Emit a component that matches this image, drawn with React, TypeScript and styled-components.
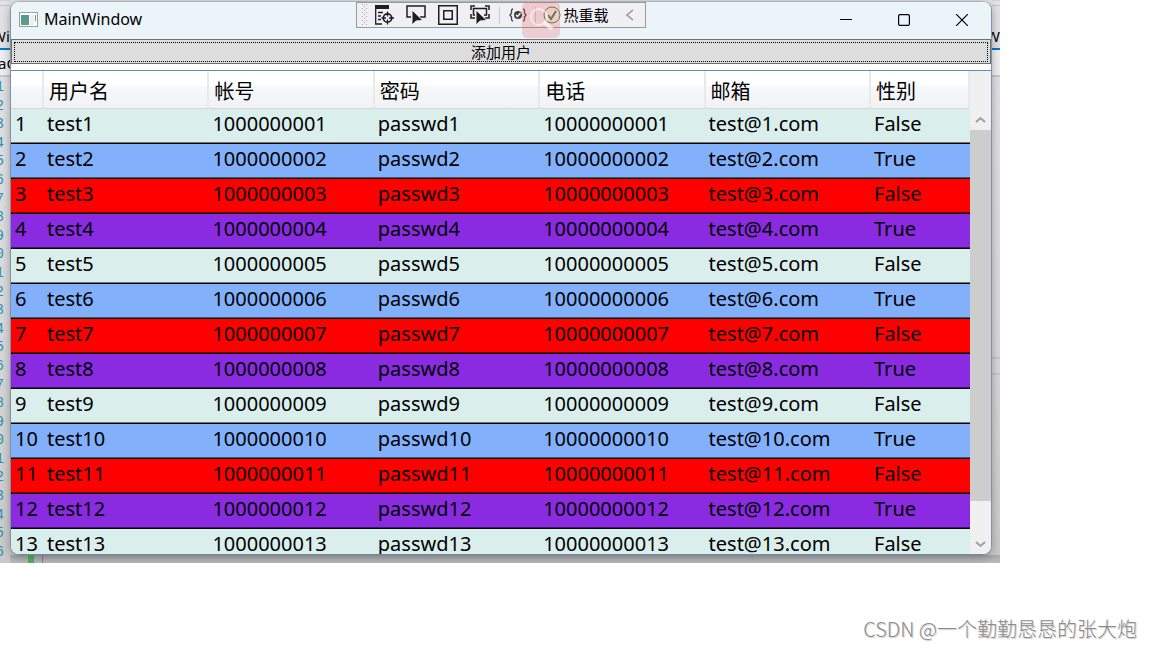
import React from 'react';
import styled, { createGlobalStyle } from 'styled-components';

const ui = `'Noto Sans', 'Noto Sans CJK SC', sans-serif`;
const mono = `'Liberation Mono', 'DejaVu Sans Mono', monospace`;

const GlobalStyle = createGlobalStyle`
  *, *::before, *::after { box-sizing: border-box; }
  body { margin: 0; background: #fff; color: #000; font-family: ${ui}; overflow: hidden; }
  button { font: inherit; color: inherit; cursor: pointer; }
`;

const Page = styled.main`
  min-height: 100vh;
  display: flex;
  flex-direction: column;
  justify-content: space-between;
`;

const Desktop = styled.section`
  margin-right: 152px;
  display: grid;
  grid-template-columns: 10px minmax(0, 1fr) 8px;
  background: linear-gradient(#e3e3e7, #d9d9dc 60%, #c9c9c9);
  overflow: hidden;
`;

const EditorSide = styled.div<{ $full?: boolean }>`
  grid-row: ${(p) => (p.$full ? '1 / 3' : '1')};
  grid-column: ${(p) => (p.$full ? '1' : '3')};
  display: flex;
  flex-direction: column;
  overflow: hidden;
  padding-top: 4px;
  border-top: 1px solid #d4d4d8;
`;

const TabStub = styled.div<{ $pull: number }>`
  height: 45px;
  padding-top: 20px;
  border-top: 1px solid #c6c6d2;
  border-bottom: 2px solid #007acc;
  font-size: 15px;
  line-height: 20px;
  white-space: nowrap;
  text-indent: ${(p) => p.$pull}px;
`;

const ScopeStub = styled.div`
  height: 27px;
  padding-top: 3px;
  border-bottom: 2px solid #c6c6d6;
  background: #f0f0f2;
  font-size: 15px;
  line-height: 20px;
  white-space: nowrap;
  text-indent: -2px;
`;

const LineNumbers = styled.ol`
  flex: 1;
  margin: 0;
  padding: 1px 0 2px;
  width: 4px;
  list-style: none;
  display: flex;
  flex-direction: column;
  align-items: flex-end;
  justify-content: space-between;
  overflow: hidden;
  color: #2b91af;
  font: 14px/18px ${mono};
`;

const EditorRule = styled.div`
  margin-top: 280px;
  height: 18px;
  border-top: 2px solid #c6c6d0;
  border-bottom: 2px solid #c6c6d0;
`;

const CodeStrip = styled.div`
  grid-row: 2;
  grid-column: 2 / -1;
  height: 8px;
  padding-left: 18px;
  display: flex;
  background: linear-gradient(#a9a9a9, #bcbcbc);
`;

const ChangeMark = styled.span`
  width: 6px;
  background: #57b257;
`;

const FoldLine = styled.span`
  width: 1px;
  margin-left: 8px;
  background: #808080;
`;

const AppWindow = styled.section`
  grid-row: 1;
  grid-column: 2;
  position: relative;
  margin-top: 1px;
  height: 554px;
  display: flex;
  flex-direction: column;
  border: 1px solid #aab4ba;
  border-left-color: #7d93a8;
  border-right-color: #7d93a8;
  border-bottom-color: #688caf;
  border-radius: 9px;
  background: #fff;
  overflow: hidden;
  box-shadow: 0 2px 10px rgba(0, 0, 0, 0.3);
`;

const TitleBar = styled.header`
  height: 37px;
  flex: none;
  padding: 0 0 2px 8px;
  display: flex;
  align-items: center;
  background: #ebf5f9;
`;

const Title = styled.h1`
  flex: 1;
  margin: 0;
  padding: 0 0 2px 6px;
  font-size: 16px;
  line-height: 20px;
  font-weight: 400;
`;

const CaptionButton = styled.button`
  width: 58px;
  height: 35px;
  padding: 0;
  border: 0;
  background: none;
  display: grid;
  place-items: center;
`;

const DebugBar = styled.div`
  position: absolute;
  top: 0;
  left: 50%;
  width: 290px;
  height: 26px;
  margin-left: -145px;
  padding-left: 5px;
  display: flex;
  align-items: center;
  border: 1px solid #999;
  background: #f0eff3;
`;

const ToolButton = styled.button<{ $width?: number }>`
  width: ${(p) => p.$width ?? 32}px;
  flex: none;
  height: 24px;
  padding: 0;
  border: 0;
  background: none;
  display: flex;
  align-items: center;
  justify-content: center;
  gap: 2px;
  font-size: 15px;
  line-height: 20px;
  white-space: nowrap;
`;

const ToolGroup = styled.div`
  display: flex;
  margin-right: 3px;
`;

const Divider = styled.span`
  width: 1px;
  height: 17px;
  background: #c9c9dd;
`;

const SearchBadge = styled.div`
  position: absolute;
  top: 0;
  left: 50%;
  width: 38px;
  height: 36px;
  margin-left: 21px;
  border-radius: 5px;
  background: rgba(235, 90, 90, 0.25);
  pointer-events: none;
`;

const AddButton = styled.button`
  flex: none;
  height: 25px;
  padding: 2px 2px 1px;
  border: 1px solid #707070;
  background: #ddd;
  font-size: 15px;
  line-height: 18px;
`;

const FocusRing = styled.span`
  display: block;
  height: 20px;
  border: 1px dotted #000;
`;

const GridPanel = styled.div`
  flex: 1;
  min-height: 0;
  margin-top: 6px;
  display: grid;
  grid-template-columns: minmax(0, 1fr) 21px;
  border-top: 1px solid #688caf;
`;

const TableClip = styled.div`
  min-height: 0;
  overflow: hidden;
`;

const UserTable = styled.table`
  width: 100%;
  table-layout: fixed;
  border-collapse: separate;
  border-spacing: 0;
  font-size: 20px;
  line-height: 28px;
`;

const HeadCell = styled.th`
  height: 38px;
  padding: 4px 0 0 5px;
  border-right: 2px solid #e8e9eb;
  border-bottom: 1px solid #d5d5d5;
  background: linear-gradient(#fff 40%, #f7f8fa 41%, #f0f2f4);
  font-weight: 400;
  text-align: left;
  white-space: nowrap;
`;

const rowColors = ['#daeeec', '#82b0fa', '#ff0000', '#8a2be2'];

const Row = styled.tr<{ $tone: number }>`
  background: ${(p) => rowColors[p.$tone]};
`;

const Cell = styled.td`
  height: 35px;
  padding: 0 0 4px 3px;
  border-bottom: 1px solid #000;
  box-shadow: inset 0 -1px rgba(0, 0, 0, 0.5);
  white-space: nowrap;

  &:first-child {
    padding-left: 4px;
  }
`;

const ScrollBar = styled.div`
  min-height: 0;
  padding-top: 38px;
  display: flex;
  flex-direction: column;
  background: #f0f0f0;
`;

const ScrollArrow = styled.button`
  height: 21px;
  flex: none;
  padding: 0;
  border: 0;
  background: none;
  display: grid;
  place-items: center;
`;

const Track = styled.div`
  flex: 1;
`;

const Thumb = styled.div`
  height: 92%;
  background: #cdcdcd;
`;

const Credit = styled.footer`
  padding: 0 15px 5px 0;
  font: 300 20px/28px 'Noto Sans CJK SC', sans-serif;
  color: #8c8c8c;
  text-shadow: 1px 1px 1px #ccc;
  text-align: right;
`;

const Chevron = ({ up }: { up?: boolean }) => (
  <svg width="11" height="8" viewBox="0 0 11 8" fill="none" stroke="#a0a0a0" strokeWidth="2">
    <path d={up ? 'M1 6 5.500 2 10 6' : 'M1 2 5.500 6 10 2'} />
  </svg>
);

const Pointer = () => <path d="M7 6v15l4-4 7-.5z" fill="#1e1e1e" stroke="#f0eff3" strokeWidth="1" />;

const columns = ['', '用户名', '帐号', '密码', '电话', '邮箱', '性别'];

const users = Array.from({ length: 13 }, (_, i) => {
  const n = i + 1;
  const tail = String(n).padStart(2, '0');
  return [n, `test${n}`, `10000000${tail}`, `passwd${n}`, `100000000${tail}`, `test@${n}.com`, n % 2 ? 'False' : 'True'];
});

export default function App() {
  return (
    <>
      <GlobalStyle />
      <Page>
        <Desktop>
          <EditorSide $full>
            <TabStub $pull={-8}>Win</TabStub>
            <ScopeStub>aG</ScopeStub>
            <LineNumbers>
              {Array.from({ length: 26 }, (_, i) => (
                <li key={i}>{(i + 1) % 10}</li>
              ))}
            </LineNumbers>
          </EditorSide>
          <AppWindow>
            <TitleBar>
              <svg width="19" height="15" viewBox="0 0 19 15">
                <defs>
                  <linearGradient id="pane" x2="0" y2="1">
                    <stop stopColor="#5b8fb0" />
                    <stop offset="1" stopColor="#58a86c" />
                  </linearGradient>
                </defs>
                <rect x=".5" y=".5" width="18" height="14" fill="#fff" stroke="#9a9fa3" />
                <rect x="2" y="3" width="8" height="10" fill="url(#pane)" />
                <path d="M11 3h4v10h-4z" fill="#edf0f2" />
                <path d="M16 3h1v6h-1z" fill="url(#pane)" />
              </svg>
              <Title>MainWindow</Title>
              <CaptionButton aria-label="Minimize">
                <svg width="12" height="12"><path d="M0 5.500h12" stroke="#000" /></svg>
              </CaptionButton>
              <CaptionButton aria-label="Maximize">
                <svg width="12" height="12"><rect x=".6" y=".6" width="10.800" height="10.800" rx="1.500" fill="none" stroke="#000" strokeWidth="1.200" /></svg>
              </CaptionButton>
              <CaptionButton aria-label="Close">
                <svg width="12" height="12"><path d="M0 0 12 12M12 0 0 12" stroke="#000" strokeWidth="1.200" /></svg>
              </CaptionButton>
            </TitleBar>
            <AddButton>
              <FocusRing>添加用户</FocusRing>
            </AddButton>
            <GridPanel>
              <TableClip>
                <UserTable>
                  <colgroup>
                    <col style={{ width: 33 }} />
                    <col span={5} />
                    <col style={{ width: 99 }} />
                  </colgroup>
                  <thead>
                    <tr>
                      {columns.map((c) => (
                        <HeadCell key={c} scope="col">{c}</HeadCell>
                      ))}
                    </tr>
                  </thead>
                  <tbody>
                    {users.map((u, i) => (
                      <Row key={i} $tone={i % 4}>
                        {u.map((v, j) => (
                          <Cell key={j}>{v}</Cell>
                        ))}
                      </Row>
                    ))}
                  </tbody>
                </UserTable>
              </TableClip>
              <ScrollBar>
                <ScrollArrow aria-label="Scroll up"><Chevron up /></ScrollArrow>
                <Track><Thumb /></Track>
                <ScrollArrow aria-label="Scroll down"><Chevron /></ScrollArrow>
              </ScrollBar>
            </GridPanel>
            <DebugBar>
              <svg width="6" height="22" viewBox="0 0 6 22" fill="#a5a5a5">
                {[0, 4, 8, 12, 16, 20].map((y) => (
                  <path key={y} d={`M0 ${y}h1v1h-1zM4 ${y}h1v1h-1zM2 ${y + 2}h1v1h-1z`} />
                ))}
              </svg>
              <ToolGroup>
                <ToolButton aria-label="Live visual tree">
                  <svg width="22" height="22" viewBox="0 0 22 22" fill="none" stroke="#1e1e1e" strokeWidth="1.300">
                    <path d="M2 1h14v4H2z" fill="#1e1e1e" stroke="none" />
                    <path d="M2.700 5v15H9M5 8.500h5M5 12h3M5 15.500h3" />
                    <circle cx="14.500" cy="14" r="4.200" strokeWidth="1.700" />
                    <path d="M14.500 7.500v5M14.500 15.500v5M8.500 14h4.500M16 14h5" />
                  </svg>
                </ToolButton>
                <ToolButton aria-label="Select element">
                  <svg width="22" height="22" viewBox="0 0 22 22" fill="none" stroke="#1e1e1e" strokeWidth="1.500">
                    <path d="M6 13H2V2h18v11h-5" /><Pointer />
                  </svg>
                </ToolButton>
                <ToolButton aria-label="Display layout adorners">
                  <svg width="22" height="22" viewBox="0 0 22 22" fill="none" stroke="#1e1e1e" strokeWidth="1.500">
                    <path d="M1.750 1.750h18.500v18.500H1.750zM6.750 6.750h8.500v8.500h-8.500z" />
                  </svg>
                </ToolButton>
                <ToolButton aria-label="Track focused element">
                  <svg width="22" height="22" viewBox="0 0 22 22" fill="none" stroke="#1e1e1e" strokeWidth="1.500">
                    <path d="M2 6V2h4M16 2h4v4M2 10v4h4M20 10v4h-4M6 11H4.500V4.500h13V11H15" /><Pointer />
                  </svg>
                </ToolButton>
              </ToolGroup>
              <Divider />
              <ToolButton aria-label="Binding failures" $width={35}>
                <svg width="18" height="16" viewBox="0 0 18 16" fill="none" stroke="#424242" strokeWidth="1.300">
                  <path d="M4 2Q2.500 2 2.500 4v2L1 8l1.500 2v2q0 2 1.500 2M14 2q1.500 0 1.500 2v2L17 8l-1.500 2v2q0 2-1.500 2" />
                  <circle cx="9" cy="8" r="4" fill="#424242" stroke="none" />
                  <path d="m7 8 1.500 1.500L11.500 6" stroke="#fff" />
                </svg>
              </ToolButton>
              <Divider />
              <ToolButton $width={80}>
                <svg width="18" height="18" viewBox="0 0 18 18" fill="none" stroke="#388a34">
                  <circle cx="9" cy="9" r="8" />
                  <path d="m5 9 3 4 5-8" strokeWidth="2" />
                </svg>
                热重载
              </ToolButton>
              <ToolButton aria-label="Collapse" $width={27}>
                <svg width="8" height="12" viewBox="0 0 8 12" fill="none" stroke="#999" strokeWidth="1.500"><path d="M7 1 1 6l6 5" /></svg>
              </ToolButton>
            </DebugBar>
            <SearchBadge>
              <svg width="38" height="36" viewBox="0 0 38 36" fill="none" stroke="rgba(255,255,255,.6)" strokeWidth="2">
                <circle cx="17" cy="15" r="8" /><path d="m23 21 6 5" strokeWidth="4" strokeLinecap="round" />
              </svg>
            </SearchBadge>
          </AppWindow>
          <EditorSide>
            <TabStub $pull={-6}>Win</TabStub>
            <ScopeStub />
            <EditorRule />
          </EditorSide>
          <CodeStrip>
            <ChangeMark />
            <FoldLine />
          </CodeStrip>
        </Desktop>
        <Credit>CSDN @一个勤勤恳恳的张大炮</Credit>
      </Page>
    </>
  );
}
